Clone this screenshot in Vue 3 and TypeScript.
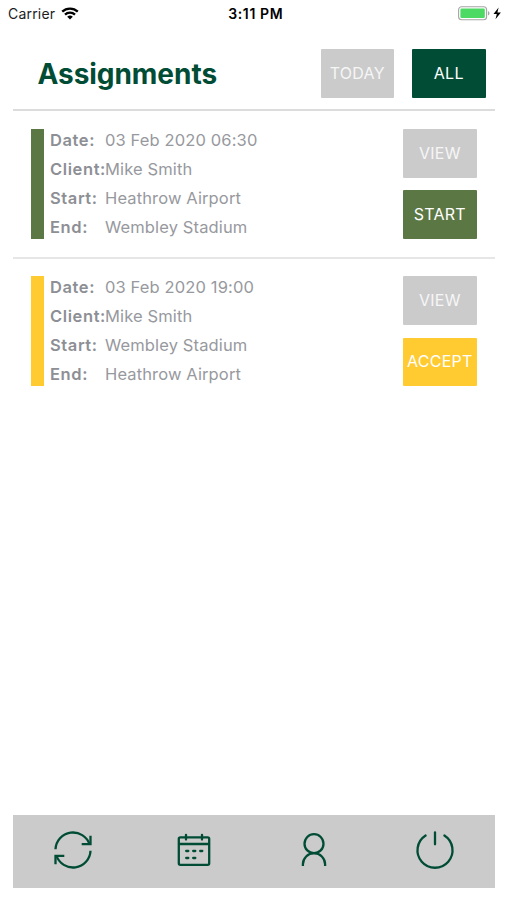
<script setup lang="ts">
interface Assignment {
  id: number
  date: string
  client: string
  start: string
  end: string
  action: 'START' | 'ACCEPT'
  tone: 'green' | 'amber'
}

const assignments: Assignment[] = [
  { id: 1, date: '03 Feb 2020 06:30', client: 'Mike Smith', start: 'Heathrow Airport', end: 'Wembley Stadium', action: 'START', tone: 'green' },
  { id: 2, date: '03 Feb 2020 19:00', client: 'Mike Smith', start: 'Wembley Stadium', end: 'Heathrow Airport', action: 'ACCEPT', tone: 'amber' },
]
</script>

<template>
  <div class="screen">
    <div class="status">
      <div class="carrier">
        <span class="carrier-name">Carrier</span>
        <svg class="wifi" width="18" height="13" viewBox="0 0 18 13">
          <g fill="none" stroke="#000" stroke-width="2.3">
            <path d="M1.2 4.7a11.2 11.2 0 0 1 15.6 0" />
            <path d="M4 7.7a7.2 7.2 0 0 1 10 0" />
          </g>
          <path d="M6.2 9.8a4.2 4.2 0 0 1 5.6 0L9 12.6z" fill="#000" />
        </svg>
      </div>
      <span class="time">3:11 PM</span>
      <div class="power">
        <svg width="44" height="15" viewBox="0 0 44 15">
          <rect x="0.6" y="0.8" width="28" height="13" rx="3" fill="#fff" stroke="#a5a5a5" stroke-width="1.1" />
          <rect x="2.4" y="2.6" width="24.4" height="9.4" rx="1.3" fill="#4cd964" />
          <path d="M30 5v4.600a2.500 2.500 0 0 0 0-4.600z" fill="#a5a5a5" />
          <path d="M40.600 1.500 35.500 8h3.300l-1.300 5.200 5.400-6.700h-3.500z" fill="#000" />
        </svg>
      </div>
    </div>

    <main class="page">
      <header class="header">
        <h1>Assignments</h1>
        <div class="filters">
          <button class="btn grey">TODAY</button>
          <button class="btn dark">ALL</button>
        </div>
      </header>

      <section v-for="item in assignments" :key="item.id" class="card">
        <div class="marker" :class="item.tone"></div>
        <dl class="details">
          <dt>Date:</dt><dd>{{ item.date }}</dd>
          <dt>Client:</dt><dd>{{ item.client }}</dd>
          <dt>Start:</dt><dd>{{ item.start }}</dd>
          <dt>End:</dt><dd>{{ item.end }}</dd>
        </dl>
        <div class="actions">
          <button class="btn grey">VIEW</button>
          <button class="btn" :class="item.tone">{{ item.action }}</button>
        </div>
      </section>
    </main>

    <nav class="tabs">
      <a class="tab">
        <svg width="40" height="40" viewBox="0 0 40 40">
          <path d="M2.500 19.300A17.500 17.500 0 0 1 36.600 14.500" />
          <path d="M37.500 5.800v8.400h-8.800" />
          <path d="M37.500 20.700A17.500 17.500 0 0 1 3.400 25.500" />
          <path d="M2.500 34.200v-8.400h8.800" />
        </svg>
      </a>
      <a class="tab">
        <svg width="40" height="40" viewBox="0 0 40 40">
          <rect x="4.800" y="7.300" width="30.400" height="27.500" rx="1.500" />
          <path d="M5 14h30M12 4.800v4.800M28 4.800v4.800" stroke-linecap="round" />
          <path d="M12.200 21h2.100M19.200 21h2.100M26.200 21h2.100M12.200 28h2.100M19.200 28h2.100" stroke-linecap="round" />
        </svg>
      </a>
      <a class="tab">
        <svg width="40" height="40" viewBox="0 0 40 40">
          <circle cx="20" cy="13.700" r="9.500" />
          <path d="M8.900 36V34.300a11.100 11.100 0 0 1 22.200 0V36" />
        </svg>
      </a>
      <a class="tab">
        <svg width="40" height="40" viewBox="0 0 40 40">
          <path d="M10.600 5.500a17.500 17.500 0 1 0 18.800 0M20 2.300v12" stroke-linecap="round" />
        </svg>
      </a>
    </nav>
  </div>
</template>

<style>
body {
  background: #fff;
}
</style>

<style scoped>
.screen {
  width: 507px;
  height: 900px;
  display: flex;
  flex-direction: column;
  background: #fff;
  font-family: Inter, "Liberation Sans", sans-serif;
  overflow: hidden;
}

.status {
  height: 27px;
  display: grid;
  grid-template-columns: 1fr auto 1fr;
  align-items: center;
  padding: 0 5px 0 8px;
  color: #1c1c1e;
  font-size: 14px;
}

.carrier {
  display: flex;
  align-items: center;
  gap: 6px;
}

.carrier-name {
  letter-spacing: 0.2px;
}

.time {
  font-weight: 600;
  letter-spacing: 0.600px;
  color: #000;
  padding-left: 1.500px;
}

.power {
  display: flex;
  justify-content: flex-end;
}

.power svg {
  margin-top: -1px;
}

.page {
  flex: 1;
  margin: 0 12px 0 13px;
}

.header {
  height: 82px;
  box-sizing: content-box;
  border-bottom: 2px solid #dcdcdc;
  display: flex;
  justify-content: space-between;
  padding: 0 9.500px 0 24.500px;
}

h1 {
  margin: 30px 0 0;
  font-size: 28px;
  line-height: 34px;
  font-weight: 700;
  color: #004c35;
  letter-spacing: -0.050px;
}

.filters {
  display: flex;
  gap: 18px;
  padding-top: 22.300px;
}

.btn {
  width: 73.500px;
  height: 48.800px;
  padding: 0 0 1px;
  border: 0;
  border-radius: 1px;
  color: #fff;
  font-family: inherit;
  font-size: 16px;
  letter-spacing: 0.250px;
  text-align: center;
  white-space: nowrap;
}

.grey {
  background: #cbcbcb;
  color: #f6f6f6;
}

.dark {
  background: #004c35;
}

.green {
  background: #5b7743;
}

.amber {
  background: #ffcb31;
}

.card {
  display: flex;
  height: 110px;
  padding: 18px 18.400px 18px 18.400px;
}

.card + .card {
  border-top: 2px solid #e6e6e6;
  padding-top: 17.400px;
}

.marker {
  width: 12.500px;
  height: 110px;
}

.details {
  margin: -0.500px 0 0 6.100px;
  flex: 1;
  display: grid;
  grid-template-columns: 55px 1fr;
  grid-auto-rows: 29.100px;
  font-size: 16.500px;
  line-height: 22px;
  letter-spacing: 0.130px;
  color: #97999e;
}

dt {
  font-weight: 600;
  letter-spacing: 0.600px;
  color: #8d8f95;
}

dd {
  margin: 0;
}

.actions {
  display: flex;
  flex-direction: column;
  justify-content: space-between;
}

.tabs {
  height: 73px;
  margin: 0 12px 12.500px 13px;
  display: grid;
  grid-template-columns: repeat(4, 1fr);
  background: #cbcbcb;
}

.tab {
  display: flex;
  justify-content: center;
  padding-top: 15px;
}

.tab svg {
  fill: none;
  stroke: #004c35;
  stroke-width: 2.300;
}
</style>
